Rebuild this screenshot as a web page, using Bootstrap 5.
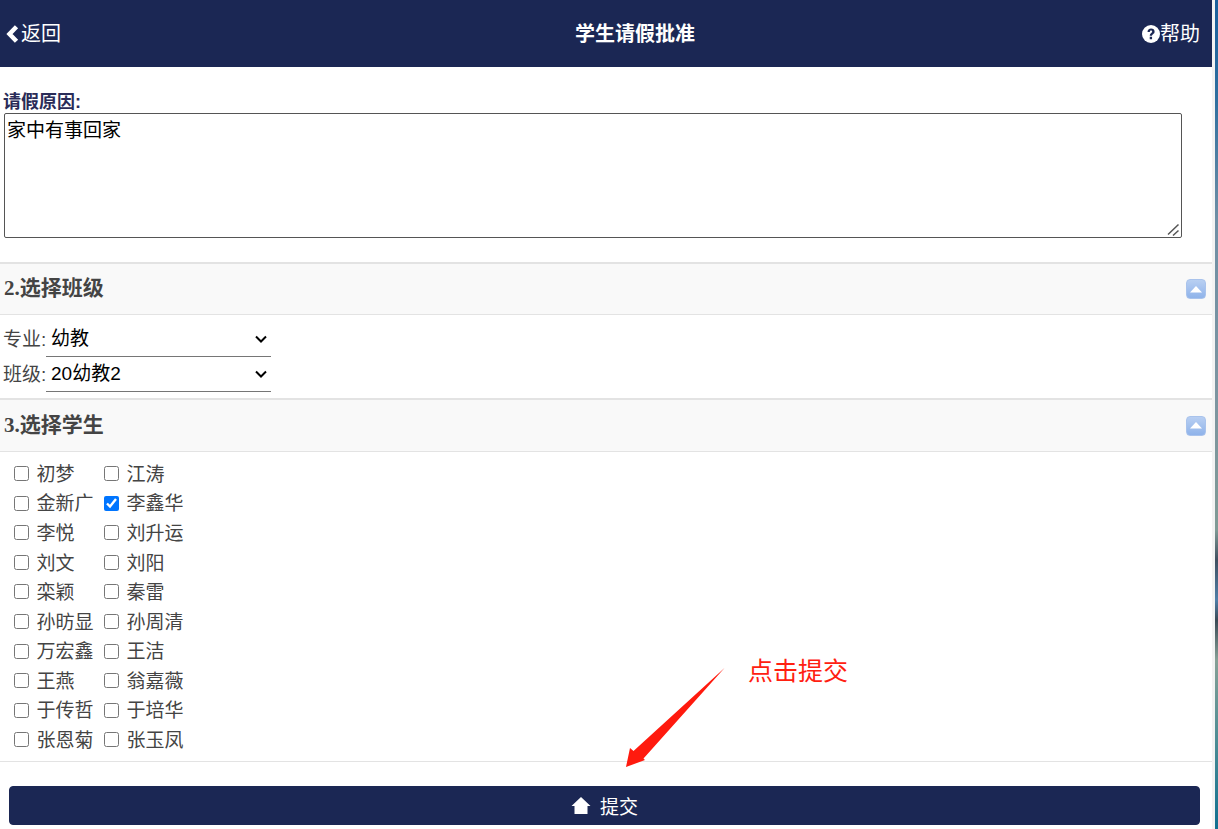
<!DOCTYPE html>
<html lang="zh-CN">
<head>
<meta charset="utf-8">
<title>学生请假批准</title>
<link href="https://cdn.jsdelivr.net/npm/bootstrap@5.3.0/dist/css/bootstrap.min.css" rel="stylesheet">
<style>
html,body{height:100%;overflow:hidden}
body{font-family:"Liberation Sans","Noto Sans CJK SC",sans-serif;font-size:19px;color:#333;background:#fff;line-height:1.25}
.shell{height:829px;position:relative}
.pagearea{width:1212px;flex:none}
.sidegap{width:3px;background:#f3f3f3;flex:none}
.sideimg{width:3px;flex:none;background:linear-gradient(180deg,#1a5f9c 0,#2f6f9f 100px,#6f8fa5 220px,#7d95a0 400px,#7f9a95 530px,#405060 560px,#4f7fa8 600px,#3a4a55 620px,#86a096 660px,#4d8c94 740px,#0f6f90 829px)}
.topbar{height:67px;background:#1b2754;color:#fff;padding:0 12px 0 5px}
.topbar span{font-size:20px}
.toptitle{font-size:20px;font-weight:700;padding-top:1px}
.topside{width:120px;line-height:1}
.topside-left{width:185px}
.reason-label{font-size:18px;font-weight:700;color:#2a2c58;padding:24px 0 0 3px;line-height:22px;height:46px}
.reason-input{display:block;width:1178px;height:125px;margin-left:4px;border:1px solid #555;border-radius:2px;padding:6px 2px;font-size:19px;line-height:22px;color:#000;outline:0;font-family:inherit}
.reason-input::-webkit-resizer{background:url("data:image/svg+xml,%3Csvg xmlns='http://www.w3.org/2000/svg' width='15' height='15' viewBox='0 0 15 15'%3E%3Cpath d='M2 12.500l10.500-10M7 13.500l5.500-5' fill='none' stroke='%23555' stroke-width='1.500'/%3E%3C/svg%3E") no-repeat center}
.sec-head{background:#f9f9f9;border-top:2px solid #e3e3e3;border-bottom:1px solid #e3e3e3;height:53px;padding:0 6px 0 4px;color:#444}
.sec-head-tall{height:54px}
.sec-title{font-family:"Liberation Serif","Noto Sans CJK SC",sans-serif;font-size:21px;font-weight:700;padding-bottom:1px}
.sec-toggle{width:20px;height:20px;border-radius:4px;background:linear-gradient(180deg,#b8cff2,#8fb3ea);border:1px solid #a9c3ec}
.sel-row{height:35px}
.sel-label{width:46px;padding-left:3px;white-space:nowrap;color:#444;flex:none}
.sel-box{appearance:none;-webkit-appearance:none;width:225px;height:35px;padding:0 0 0 5px;border:0;border-bottom:1px solid #767676;border-radius:0;font-size:19px;color:#000;font-family:inherit;outline:0;background:#fff url("data:image/svg+xml,%3Csvg xmlns='http://www.w3.org/2000/svg' width='12' height='8' viewBox='0 0 12 8'%3E%3Cpath d='M1 1.500l5 5 5-5' fill='none' stroke='%23000' stroke-width='2'/%3E%3C/svg%3E") no-repeat right 4px center}
.sel-list{padding:7px 0;height:83px}
.stu-grid{padding:8px 0 6px 14px;display:grid;grid-template-columns:90px 90px;grid-auto-rows:29.55px;border-bottom:1px solid #e3e3e3;height:310px;width:100%}
.stu-item{display:flex;align-items:center;gap:8px;white-space:nowrap;color:#444;margin:0}
.stu-item input{width:15px;height:15px;margin:0 0 2px;flex:none;accent-color:#0075ff}
.stu-name{margin-left:-.5px}
.footer-bar{padding:24px 12px 0 9px}
.submit-btn{height:39px;background:#1b2754;border:1px solid #1b2754;border-radius:4px;color:#fff;font-size:19px;width:100%;padding:0;line-height:1}
.submit-btn:hover{background:#1b2754;color:#fff}
.submit-label{padding:4px 0 0 1px}
.note{position:absolute;left:748px;top:655px;font-size:25px;line-height:32px;color:#ff2010}
.note-arrow{position:absolute;left:620px;top:660px}
</style>
</head>
<body>
<div class="shell d-flex">
  <div class="pagearea">
    <header class="topbar d-flex align-items-center justify-content-between">
      <div class="topside topside-left d-flex align-items-center">
        <svg width="16" height="20" viewBox="0 0 16 20"><path d="M11.500 2.700 4.500 10l7 7.300" fill="none" stroke="#fff" stroke-width="4.500"/></svg><span>返回</span>
      </div>
      <div class="toptitle">学生请假批准</div>
      <div class="topside d-flex align-items-center justify-content-end">
        <svg width="18" height="18" viewBox="0 0 17 17"><circle cx="8.500" cy="8.500" r="8.500" fill="#fff"/><path d="M5.200 6.700c0-2 1.400-3.300 3.400-3.300s3.300 1.200 3.300 2.900c0 2.200-2.400 2.200-2.400 3.900H7.300c0-2.700 2.300-2.700 2.300-3.900 0-.6-.4-1-1.100-1-.8 0-1.100.5-1.100 1.400zM7.300 11.200h2.200v2.200H7.300z" fill="#1b2754"/></svg><span>帮助</span>
      </div>
    </header>

    <div class="reason-label">请假原因:</div>
    <textarea class="reason-input">家中有事回家</textarea>

    <div class="sec-head d-flex align-items-center justify-content-between mt-4">
      <div class="sec-title">2.选择班级</div>
      <div class="sec-toggle d-flex align-items-center justify-content-center"><svg width="12" height="7" viewBox="0 0 12 7"><path d="M6 0l6 6.500H0z" fill="#fff"/></svg></div>
    </div>
    <div class="sel-list">
      <div class="sel-row d-flex align-items-center"><label class="sel-label">专业:</label><select class="sel-box"><option>幼教</option></select></div>
      <div class="sel-row d-flex align-items-center"><label class="sel-label">班级:</label><select class="sel-box"><option>20幼教2</option></select></div>
    </div>

    <div class="sec-head sec-head-tall d-flex align-items-center justify-content-between">
      <div class="sec-title">3.选择学生</div>
      <div class="sec-toggle d-flex align-items-center justify-content-center"><svg width="12" height="7" viewBox="0 0 12 7"><path d="M6 0l6 6.500H0z" fill="#fff"/></svg></div>
    </div>
    <div class="stu-grid">
      <label class="stu-item"><input type="checkbox"><span class="stu-name">初梦</span></label>
      <label class="stu-item"><input type="checkbox"><span class="stu-name">江涛</span></label>
      <label class="stu-item"><input type="checkbox"><span class="stu-name">金新广</span></label>
      <label class="stu-item"><input type="checkbox" checked><span class="stu-name">李鑫华</span></label>
      <label class="stu-item"><input type="checkbox"><span class="stu-name">李悦</span></label>
      <label class="stu-item"><input type="checkbox"><span class="stu-name">刘升运</span></label>
      <label class="stu-item"><input type="checkbox"><span class="stu-name">刘文</span></label>
      <label class="stu-item"><input type="checkbox"><span class="stu-name">刘阳</span></label>
      <label class="stu-item"><input type="checkbox"><span class="stu-name">栾颖</span></label>
      <label class="stu-item"><input type="checkbox"><span class="stu-name">秦雷</span></label>
      <label class="stu-item"><input type="checkbox"><span class="stu-name">孙昉显</span></label>
      <label class="stu-item"><input type="checkbox"><span class="stu-name">孙周清</span></label>
      <label class="stu-item"><input type="checkbox"><span class="stu-name">万宏鑫</span></label>
      <label class="stu-item"><input type="checkbox"><span class="stu-name">王洁</span></label>
      <label class="stu-item"><input type="checkbox"><span class="stu-name">王燕</span></label>
      <label class="stu-item"><input type="checkbox"><span class="stu-name">翁嘉薇</span></label>
      <label class="stu-item"><input type="checkbox"><span class="stu-name">于传哲</span></label>
      <label class="stu-item"><input type="checkbox"><span class="stu-name">于培华</span></label>
      <label class="stu-item"><input type="checkbox"><span class="stu-name">张恩菊</span></label>
      <label class="stu-item"><input type="checkbox"><span class="stu-name">张玉凤</span></label>
    </div>

    <div class="footer-bar">
      <button class="btn submit-btn d-flex align-items-center justify-content-center gap-2" type="button">
        <svg width="20" height="17" viewBox="0 0 20 17"><path d="M10 0l9.500 9H16.500v8h-13V9H.5z" fill="#fff"/></svg><span class="submit-label">提交</span>
      </button>
    </div>
  </div>
  <div class="sidegap"></div>
  <div class="sideimg"></div>

  <div class="note">点击提交</div>
  <svg class="note-arrow" width="110" height="112" viewBox="620 660 110 112"><path d="M724.500 668 643.500 758.500l1.500 1.500-19 7 4-19 3.500 3z" fill="#ff1a0e"/></svg>
</div>
<script src="https://cdn.jsdelivr.net/npm/bootstrap@5.3.0/dist/js/bootstrap.bundle.min.js"></script>
</body>
</html>
